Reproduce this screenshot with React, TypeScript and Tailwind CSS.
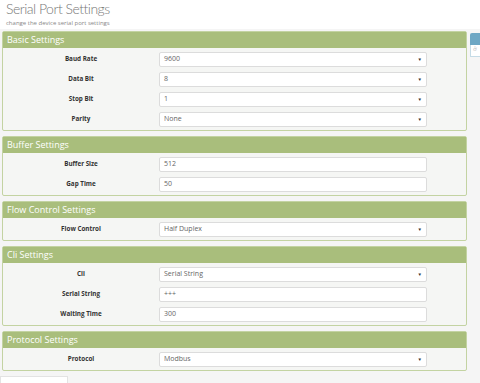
import React from "react";

type Row = { label: string; value: string; select?: boolean };
type Section = { title: string; rows: Row[] };

const sections: Section[] = [
  {
    title: "Basic Settings",
    rows: [
      { label: "Baud Rate", value: "9600", select: true },
      { label: "Data Bit", value: "8", select: true },
      { label: "Stop Bit", value: "1", select: true },
      { label: "Parity", value: "None", select: true },
    ],
  },
  {
    title: "Buffer Settings",
    rows: [
      { label: "Buffer Size", value: "512" },
      { label: "Gap Time", value: "50" },
    ],
  },
  {
    title: "Flow Control Settings",
    rows: [{ label: "Flow Control", value: "Half Duplex", select: true }],
  },
  {
    title: "Cli Settings",
    rows: [
      { label: "Cli", value: "Serial String", select: true },
      { label: "Serial String", value: "+++" },
      { label: "Waiting Time", value: "300" },
    ],
  },
  {
    title: "Protocol Settings",
    rows: [{ label: "Protocol", value: "Modbus", select: true }],
  },
];

function Panel({ s }: { s: Section }) {
  return (
    <div className="border border-[#c3d3a2] rounded-[2px] bg-[#f5f6f4]">
      <div className="h-[16px] bg-[#a9be7c] text-white text-[9px] leading-[16px] pl-[4px]">
        {s.title}
      </div>
      <div className="pt-[1px] pb-[1px]">
        {s.rows.map((r) => (
          <div key={r.label} className="flex items-center h-[20px]">
            <div className="w-[156px] text-center text-[6.3px] font-bold text-[#333]">
              {r.label}
            </div>
            <div className="w-[268px] h-[15px] bg-white border border-[#dcdcdc] rounded-[2px] flex items-center justify-between pl-[4px] pr-[4px] text-[7px] text-[#666]">
              <span>{r.value}</span>
              {r.select && <span className="text-[4.5px] text-[#333]">▼</span>}
            </div>
          </div>
        ))}
      </div>
    </div>
  );
}

export default function App() {
  return (
    <div
      className="w-[480px] h-[383px] overflow-hidden bg-[#f5f5f5] relative"
      style={{ fontFamily: '"Open Sans", "Noto Sans", sans-serif' }}
    >
      <div className="bg-white h-[29px] pl-[6px]">
        <div
          className="text-[14px] font-light text-[#777] leading-[16px] pt-[1px] tracking-[-0.5px]"
          style={{ fontFamily: 'Lato, "Open Sans", sans-serif' }}
        >
          Serial Port Settings
        </div>
        <div className="text-[6px] text-[#888] leading-[8px] mt-[2px]">
          change the device serial port settings
        </div>
      </div>
      <div className="flex pt-[2px]">
        <div className="w-[468px] pl-[2px] flex flex-col gap-[5px]">
          {sections.map((s) => (
            <Panel key={s.title} s={s} />
          ))}
        </div>
        <div className="ml-[3px] w-[10px] pt-[2px]">
          <div className="h-[12px] bg-[#6ea7c4] rounded-tl-[2px]" />
          <div className="h-[12px] bg-white border-l border-b border-[#c5dbe6] text-[6px] text-[#bbb] pl-[2px]">
            ở
          </div>
        </div>
      </div>
      <div className="absolute left-0 bottom-0 w-[68px] h-[7px] bg-white border border-[#e3e3e3] border-b-0" />
    </div>
  );
}
